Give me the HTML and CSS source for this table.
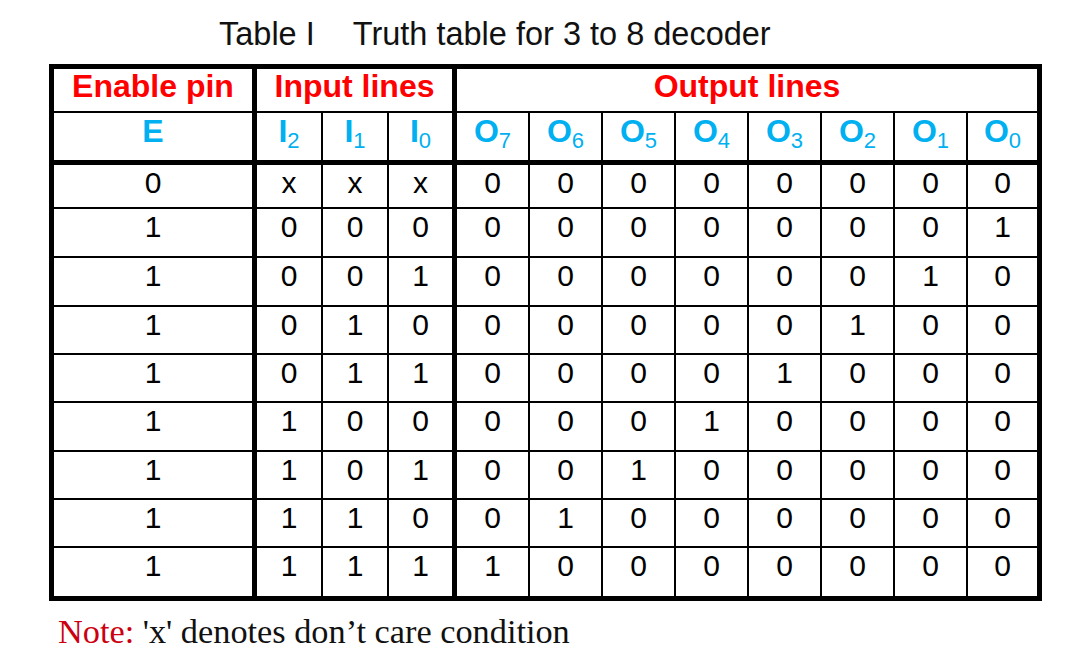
FILE: index.html
```html
<!DOCTYPE html>
<html>
<head>
<meta charset="utf-8">
<title>Truth table for 3 to 8 decoder</title>
<link rel="stylesheet" href="styles.css">
</head>
<body>
<div class="title"><span>Table I</span><span class="title-main">Truth table for 3 to 8 decoder</span></div>
<table class="truth">
  <tr class="h1">
    <th class="group thick">Enable pin</th>
    <th class="group thick" colspan="3">Input lines</th>
    <th class="group end" colspan="8">Output lines</th>
  </tr>
  <tr class="h2">
    <th class="sym w-en thick">E</th>
    <th class="sym w-i">I<sub>2</sub></th>
    <th class="sym w-i">I<sub>1</sub></th>
    <th class="sym w-i0 thick">I<sub>0</sub></th>
    <th class="sym w-o">O<sub>7</sub></th>
    <th class="sym w-o">O<sub>6</sub></th>
    <th class="sym w-o">O<sub>5</sub></th>
    <th class="sym w-o">O<sub>4</sub></th>
    <th class="sym w-o">O<sub>3</sub></th>
    <th class="sym w-o">O<sub>2</sub></th>
    <th class="sym w-o">O<sub>1</sub></th>
    <th class="sym w-o0 end">O<sub>0</sub></th>
  </tr>
  <tr class="r1"><td class="thick">0</td><td>x</td><td>x</td><td class="thick">x</td><td>0</td><td>0</td><td>0</td><td>0</td><td>0</td><td>0</td><td>0</td><td class="end">0</td></tr>
  <tr class="r49"><td class="thick">1</td><td>0</td><td>0</td><td class="thick">0</td><td>0</td><td>0</td><td>0</td><td>0</td><td>0</td><td>0</td><td>0</td><td class="end">1</td></tr>
  <tr class="r49"><td class="thick">1</td><td>0</td><td>0</td><td class="thick">1</td><td>0</td><td>0</td><td>0</td><td>0</td><td>0</td><td>0</td><td>1</td><td class="end">0</td></tr>
  <tr class="r48"><td class="thick">1</td><td>0</td><td>1</td><td class="thick">0</td><td>0</td><td>0</td><td>0</td><td>0</td><td>0</td><td>1</td><td>0</td><td class="end">0</td></tr>
  <tr class="r48"><td class="thick">1</td><td>0</td><td>1</td><td class="thick">1</td><td>0</td><td>0</td><td>0</td><td>0</td><td>1</td><td>0</td><td>0</td><td class="end">0</td></tr>
  <tr class="r49"><td class="thick">1</td><td>1</td><td>0</td><td class="thick">0</td><td>0</td><td>0</td><td>0</td><td>1</td><td>0</td><td>0</td><td>0</td><td class="end">0</td></tr>
  <tr class="r48"><td class="thick">1</td><td>1</td><td>0</td><td class="thick">1</td><td>0</td><td>0</td><td>1</td><td>0</td><td>0</td><td>0</td><td>0</td><td class="end">0</td></tr>
  <tr class="r48"><td class="thick">1</td><td>1</td><td>1</td><td class="thick">0</td><td>0</td><td>1</td><td>0</td><td>0</td><td>0</td><td>0</td><td>0</td><td class="end">0</td></tr>
  <tr class="rlast"><td class="thick">1</td><td>1</td><td>1</td><td class="thick">1</td><td>1</td><td>0</td><td>0</td><td>0</td><td>0</td><td>0</td><td>0</td><td class="end">0</td></tr>
</table>
<p class="note"><span class="note-label">Note:</span> 'x' denotes don’t care condition</p>
</body>
</html>
```

FILE: styles.css
```css
html, body {
  margin: 0;
  padding: 0;
  background: #ffffff;
}

body {
  font-family: "Liberation Sans", Arial, sans-serif;
  color: #000;
}

.title {
  margin: 18px 0 14px 219px;
  font-size: 32.5px;
  line-height: 32px;
  color: #111;
  white-space: nowrap;
}

.title-main {
  margin-left: 38px;
}

.truth {
  margin-left: 49px;
  border-collapse: separate;
  border-spacing: 0;
  border-left: 5px solid #000;
  border-top: 5px solid #000;
}

.truth th,
.truth td {
  padding: 0;
  box-sizing: content-box;
  border-right: 2px solid #000;
  border-bottom: 2px solid #000;
  text-align: center;
  vertical-align: top;
  white-space: nowrap;
}

.truth .thick,
.truth .end {
  border-right-width: 5px;
}

/* header row 1 */
.truth .h1 { height: 44px; }
.truth .group {
  padding-top: 1px;
  font-size: 32px;
  line-height: 32px;
  font-weight: bold;
  color: #ff0000;
}

/* header row 2 */
.truth .h2 { height: 52px; }
.truth .h2 > th {
  border-bottom-width: 5px;
}
.truth .sym {
  padding-top: 2px;
  font-size: 32px;
  line-height: 32px;
  font-weight: bold;
  color: #00b0f0;
}
.truth .sym sub {
  font-size: 22px;
  line-height: 22px;
  font-weight: normal;
  vertical-align: -6px;
}

.truth .w-en { width: 198px; }
.truth .w-i { width: 64px; }
.truth .w-i0 { width: 63px; }
.truth .w-o { width: 71px; }
.truth .w-o0 { width: 69px; }

/* body rows */
.truth td {
  padding-top: 3px;
  font-size: 30px;
  line-height: 30px;
  color: #000;
}
.truth .r1 { height: 44px; }
.truth .r49 { height: 49px; }
.truth .r48 { height: 48px; }
.truth .rlast { height: 53px; }
.truth .rlast > td {
  border-bottom-width: 5px;
}

.note {
  margin: 13px 0 0 58px;
  font-family: "Liberation Serif", "Times New Roman", serif;
  font-size: 34.3px;
  line-height: 34px;
  color: #111;
  white-space: nowrap;
}

.note-label {
  color: #cc0010;
}
```
